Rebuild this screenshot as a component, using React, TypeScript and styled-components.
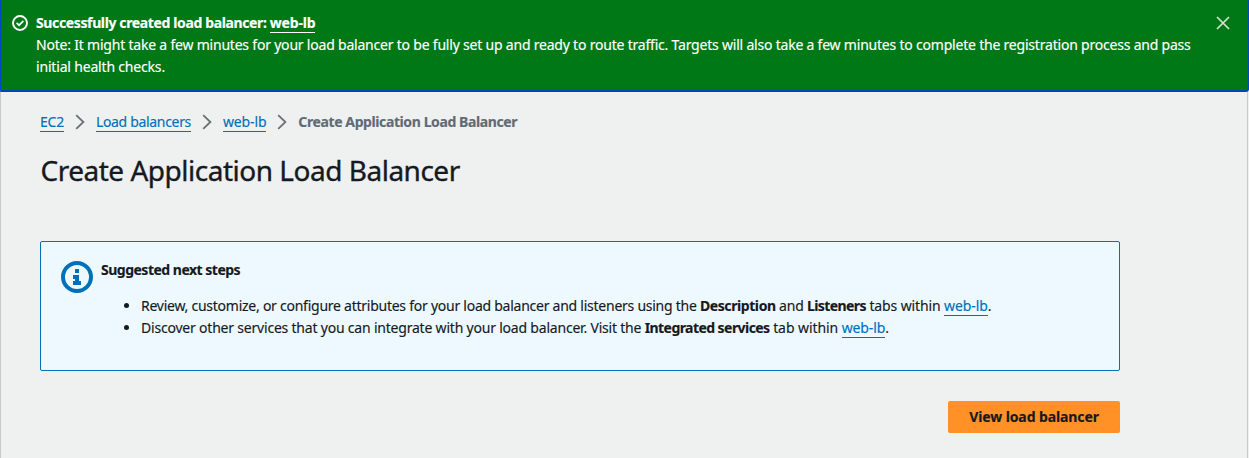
import React from "react";
import styled, { createGlobalStyle } from "styled-components";

const Global = createGlobalStyle`
  * { box-sizing: border-box; }
  body {
    margin: 0;
    background: #eff1f1;
    color: #16191f;
    font: 14px/22px "Noto Sans", "Open Sans", sans-serif;
    -webkit-text-stroke: 0.15px currentColor;
  }
`;

const Page = styled.div`
  height: 458px;
  overflow: hidden;
`;

const Run = styled.span<{ $ls?: number; $bold?: boolean }>`
  letter-spacing: ${(p) => p.$ls ?? 0}px;
  font-weight: ${(p) => (p.$bold ? 700 : 400)};
  white-space: nowrap;
`;

const Flash = styled.section`
  display: flex;
  align-items: flex-start;
  height: 92px;
  padding: 12px 18px 0 11px;
  background: #007816;
  border: solid #0047c2;
  border-width: 0 1px 2px 1px;
  border-bottom-color: #0045b5;
  border-radius: 0 0 3px 0;
  color: #fff;
`;

const FlashIcon = styled.svg`
  flex: none;
  width: 16px;
  height: 16px;
  margin: 3px 8px 0 0;
`;

const FlashText = styled.div`
  flex: 1;
`;

const Line = styled.div`
  height: 22px;
  white-space: nowrap;
`;

const CloseIcon = styled.svg`
  flex: none;
  width: 14px;
  height: 14px;
  margin-top: 4px;
`;

const Link = styled.a<{ $ls?: number; $bold?: boolean; $light?: boolean }>`
  display: inline-block;
  height: 21px;
  line-height: 22px;
  vertical-align: top;
  color: ${(p) => (p.$light ? "#fff" : "#0070b8")};
  border-bottom: 1px solid currentColor;
  font-weight: ${(p) => (p.$bold ? 700 : 400)};
  letter-spacing: ${(p) => p.$ls ?? 0}px;
  white-space: nowrap;
`;

const Main = styled.main`
  height: 366px;
  margin-right: 1px;
  padding: 19px 127px 0 39px;
  border: solid #c5caca;
  border-width: 0 1px;
`;

const Crumbs = styled.nav`
  display: flex;
  height: 22px;
`;

const Chevron = styled.svg`
  width: 10px;
  height: 16px;
  margin: 3px 11px 0 11px;
`;

const Current = styled.span`
  color: #5f6b75;
  font-weight: 700;
  letter-spacing: -0.4px;
`;

const Title = styled.h1`
  margin: 19px 0 0;
  font-size: 28px;
  line-height: 36px;
  font-weight: 400;
  letter-spacing: -0.49px;
  text-indent: 0.5px;
  white-space: nowrap;
  -webkit-text-stroke-width: 0.35px;
`;

const Alert = styled.section`
  display: flex;
  align-items: flex-start;
  height: 130px;
  margin-top: 53px;
  padding: 17px 20px;
  background: #eef9ff;
  border: 1px solid #0070b8;
  border-radius: 2px;
`;

const InfoIcon = styled.svg`
  flex: none;
  width: 32px;
  height: 32px;
  margin: 2px 8px 0 0;
`;

const Steps = styled.ul`
  margin: 14px 0 0;
  padding-left: 40px;
`;

const Step = styled.li`
  height: 22px;
  white-space: nowrap;
`;

const Actions = styled.div`
  display: flex;
  justify-content: flex-end;
  margin-top: 30px;
`;

const Button = styled.button`
  width: 172px;
  height: 32px;
  padding: 0;
  border: 0;
  border-radius: 2px;
  background: #ff9126;
  color: #16191f;
  font: 700 14px/32px "Noto Sans", "Open Sans", sans-serif;
  letter-spacing: -0.1px;
  white-space: nowrap;
`;

const Separator = () => (
  <Chevron viewBox="0 0 10 16" fill="none" stroke="#687078" strokeWidth="1.8">
    <path d="M1.2 1.2 L8.4 8 L1.2 14.8" />
  </Chevron>
);

export default function App() {
  return (
    <Page>
      <Global />
      <Flash>
        <FlashIcon viewBox="0 0 16 16" fill="none" stroke="#fff" strokeWidth="1.9">
          <circle cx="8" cy="8" r="7" />
          <path d="M4.6 7.8 L7.1 10.2 L11.4 5.9" strokeWidth="1.7" />
        </FlashIcon>
        <FlashText>
          <Line>
            <Run $bold $ls={-0.37}>Successfully created load balancer: </Run>
            <Link $light $bold $ls={-0.2}>web-lb</Link>
          </Line>
          <Line>
            <Run $ls={-0.207}>
              Note: It might take a few minutes for your load balancer to be fully set up and ready to route traffic. Targets will also take a few minutes to complete the registration process and pass
            </Run>
          </Line>
          <Line>
            <Run $ls={-0.18}>initial health checks.</Run>
          </Line>
        </FlashText>
        <CloseIcon viewBox="0 0 14 14" stroke="#d2e6d4" strokeWidth="1.7">
          <path d="M1 1 L13 13 M13 1 L1 13" />
        </CloseIcon>
      </Flash>
      <Main>
        <Crumbs>
          <Link $ls={-0.25}>EC2</Link>
          <Separator />
          <Link $ls={-0.32}>Load balancers</Link>
          <Separator />
          <Link $ls={-0.15}>web-lb</Link>
          <Separator />
          <Current>Create Application Load Balancer</Current>
        </Crumbs>
        <Title>Create Application Load Balancer</Title>
        <Alert>
          <InfoIcon viewBox="0 0 32 32">
            <circle cx="16" cy="16" r="14" fill="none" stroke="#0070b8" strokeWidth="4" />
            <path d="M14 8h4v4h-4z M12 14h6v6h2v4h-8v-4h2v-2h-2z" fill="#0070b8" />
          </InfoIcon>
          <div>
            <Line><Run $bold $ls={-0.5}>Suggested next steps</Run></Line>
            <Steps>
              <Step>
                <Run $ls={-0.252}>Review, customize, or configure attributes for your load balancer and listeners using the </Run>
                <Run $bold $ls={-0.42}>Description</Run>
                <Run $ls={-0.2}> and </Run>
                <Run $bold $ls={-0.6}>Listeners</Run>
                <Run $ls={-0.12}> tabs within </Run>
                <Link $ls={-0.1}>web-lb</Link>.
              </Step>
              <Step>
                <Run $ls={-0.205}>Discover other services that you can integrate with your load balancer. Visit the </Run>
                <Run $bold $ls={-0.56}>Integrated services</Run>
                <Run $ls={-0.08}> tab within </Run>
                <Link $ls={-0.1}>web-lb</Link>.
              </Step>
            </Steps>
          </div>
        </Alert>
        <Actions>
          <Button>View load balancer</Button>
        </Actions>
      </Main>
    </Page>
  );
}
